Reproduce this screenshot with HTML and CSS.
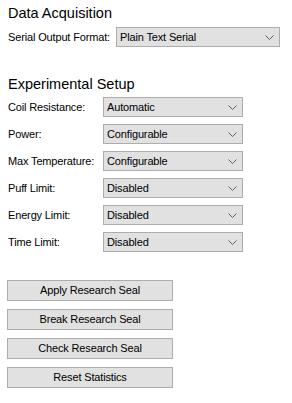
FILE: index.html
```html
<!DOCTYPE html>
<html>
<head>
<meta charset="utf-8">
<link rel="stylesheet" href="styles.css">
</head>
<body>
<div class="panel">
  <h2 class="heading first">Data Acquisition</h2>
  <div class="row wide">
    <span class="label">Serial Output Format:</span>
    <div class="combo"><span class="value">Plain Text Serial</span><svg class="chev" width="9" height="5" viewBox="0 0 9 5"><path d="M0.5 0.5 L4.5 4.5 L8.5 0.5" fill="none" stroke="#606060" stroke-width="1"/></svg></div>
  </div>

  <h2 class="heading second">Experimental Setup</h2>
  <div class="rows">
    <div class="row">
      <span class="label">Coil Resistance:</span>
      <div class="combo"><span class="value">Automatic</span><svg class="chev" width="9" height="5" viewBox="0 0 9 5"><path d="M0.5 0.5 L4.5 4.5 L8.5 0.5" fill="none" stroke="#606060" stroke-width="1"/></svg></div>
    </div>
    <div class="row">
      <span class="label">Power:</span>
      <div class="combo"><span class="value">Configurable</span><svg class="chev" width="9" height="5" viewBox="0 0 9 5"><path d="M0.5 0.5 L4.5 4.5 L8.5 0.5" fill="none" stroke="#606060" stroke-width="1"/></svg></div>
    </div>
    <div class="row">
      <span class="label">Max Temperature:</span>
      <div class="combo"><span class="value">Configurable</span><svg class="chev" width="9" height="5" viewBox="0 0 9 5"><path d="M0.5 0.5 L4.5 4.5 L8.5 0.5" fill="none" stroke="#606060" stroke-width="1"/></svg></div>
    </div>
    <div class="row">
      <span class="label">Puff Limit:</span>
      <div class="combo"><span class="value">Disabled</span><svg class="chev" width="9" height="5" viewBox="0 0 9 5"><path d="M0.5 0.5 L4.5 4.5 L8.5 0.5" fill="none" stroke="#606060" stroke-width="1"/></svg></div>
    </div>
    <div class="row">
      <span class="label">Energy Limit:</span>
      <div class="combo"><span class="value">Disabled</span><svg class="chev" width="9" height="5" viewBox="0 0 9 5"><path d="M0.5 0.5 L4.5 4.5 L8.5 0.5" fill="none" stroke="#606060" stroke-width="1"/></svg></div>
    </div>
    <div class="row">
      <span class="label">Time Limit:</span>
      <div class="combo"><span class="value">Disabled</span><svg class="chev" width="9" height="5" viewBox="0 0 9 5"><path d="M0.5 0.5 L4.5 4.5 L8.5 0.5" fill="none" stroke="#606060" stroke-width="1"/></svg></div>
    </div>
  </div>

  <div class="buttons">
    <div class="btn">Apply Research Seal</div>
    <div class="btn">Break Research Seal</div>
    <div class="btn">Check Research Seal</div>
    <div class="btn">Reset Statistics</div>
  </div>
</div>
</body>
</html>
```

FILE: styles.css
```css
html, body {
  margin: 0;
  padding: 0;
  background: #ffffff;
}

.panel {
  width: 292px;
  height: 403px;
  padding-left: 7px;
  box-sizing: border-box;
  font-family: "Liberation Sans", Arial, sans-serif;
  font-size: 11px;
  color: #000000;
}

.heading {
  margin: 0;
  font-weight: normal;
  font-size: 14.5px;
  line-height: 20px;
  height: 20px;
  padding-left: 1px;
}

.heading.first {
  padding-top: 3px;
}

.heading.second {
  margin-top: 27px;
}

.row {
  display: flex;
  align-items: center;
  height: 20px;
}

.row.wide {
  margin-top: 4px;
}

.label {
  width: 95px;
  padding-left: 1px;
  letter-spacing: -0.15px;
  flex: none;
}

.row.wide .label {
  width: 108px;
}

.combo {
  box-sizing: border-box;
  width: 140px;
  height: 20px;
  background: #e1e1e1;
  border: 1px solid #adadad;
  display: flex;
  align-items: center;
  justify-content: space-between;
  padding: 0 5px 0 3px;
}

.row.wide .combo {
  width: 164px;
}

.value {
  line-height: 18px;
  letter-spacing: -0.15px;
}

.chev {
  display: block;
  flex: none;
}

.rows {
  margin-top: 3px;
  display: flex;
  flex-direction: column;
  gap: 7px;
}

.buttons {
  margin-top: 28px;
  display: flex;
  flex-direction: column;
  gap: 8px;
}

.btn {
  box-sizing: border-box;
  width: 166px;
  height: 21px;
  background: #e1e1e1;
  border: 1px solid #adadad;
  text-align: center;
  line-height: 19px;
  letter-spacing: -0.15px;
}
```
